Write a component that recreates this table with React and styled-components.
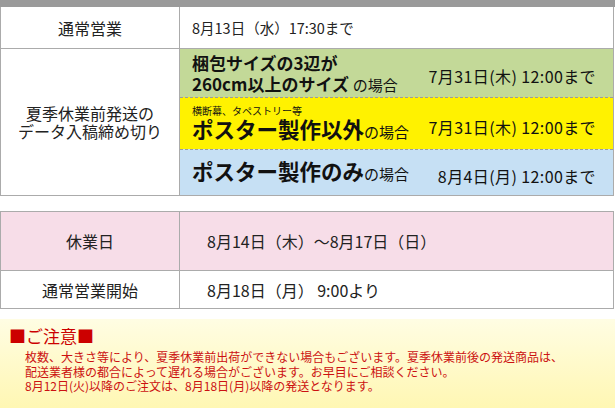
import React from 'react';
import styled, { createGlobalStyle } from 'styled-components';

const GlobalStyle = createGlobalStyle`
  body {
    margin: 0;
    background: #ffffff;
    font-family: "Noto Sans CJK JP", "Noto Sans", sans-serif;
    color: #222222;
  }
`;

const Page = styled.div`
  width: 615px;
`;

const TopBar = styled.div`
  height: 7px;
  background: #9a9a9a;
`;

const Table = styled.div`
  width: 612px;
  display: grid;
  grid-template-columns: 179px 1fr;
  border-left: 1px solid #ababab;
  border-right: 1px solid #ababab;
  border-top: ${({ $top }) => ($top ? '1px solid #ababab' : 'none')};
  margin-top: ${({ $gap }) => $gap || 0}px;
`;

const Label = styled.div`
  display: flex;
  flex-direction: column;
  align-items: center;
  justify-content: center;
  text-align: center;
  font-size: 16px;
  line-height: 18px;
  height: ${({ $h }) => ($h ? `${$h}px` : 'auto')};
  background: ${({ $bg }) => $bg || '#ffffff'};
  border-right: 1px solid #ababab;
  border-bottom: 1px solid #ababab;
`;

const LabelLine = styled.span`
  display: block;
`;

const Value = styled.div`
  display: flex;
  align-items: center;
  padding-left: ${({ $pad }) => $pad || 12}px;
  font-size: ${({ $size }) => $size || 16}px;
  height: ${({ $h }) => ($h ? `${$h}px` : 'auto')};
  background: ${({ $bg }) => $bg || '#ffffff'};
  border-bottom: 1px solid #ababab;
`;

const Stack = styled.div`
  display: flex;
  flex-direction: column;
  border-bottom: 1px solid #ababab;
`;

const Band = styled.div`
  display: flex;
  align-items: center;
  justify-content: space-between;
  height: ${({ $h }) => $h}px;
  padding: 0 17px 0 12px;
  background: ${({ $bg }) => $bg};
  & + & {
    border-top: 1px dashed #9c9c9c;
  }
`;

const Case = styled.div`
  display: flex;
  flex-direction: column;
  color: #111111;
`;

const Big = styled.span`
  display: block;
  font-weight: 700;
  font-size: ${({ $size }) => $size}px;
  line-height: ${({ $lh }) => $lh}px;
  white-space: nowrap;
`;

const Suffix = styled.span`
  font-weight: 400;
  font-size: 15px;
`;

const Small = styled.span`
  display: block;
  font-size: 10px;
  line-height: 13px;
  white-space: nowrap;
`;

const Deadline = styled.div`
  font-size: 16px;
  letter-spacing: 0.4px;
  margin-top: 6px;
  color: #111111;
  white-space: nowrap;
`;

const Note = styled.div`
  margin-top: 10px;
  height: 89px;
  box-sizing: border-box;
  padding: 6px 0 0 9px;
  background: linear-gradient(#fffde3, #fff7b3);
  color: #cc0000;
`;

const NoteTitle = styled.div`
  font-size: 17px;
  line-height: 22px;
`;

const NoteBody = styled.p`
  margin: 3px 0 0 16px;
  font-size: 12px;
  line-height: 14.5px;
  color: #cc1111;
`;

const bands = [
  {
    bg: '#c3d998',
    h: 48,
    date: '7月31日(木) 12:00まで',
    body: (
      <>
        <Big $size={17} $lh={21}>梱包サイズの3辺が</Big>
        <Big $size={17} $lh={21}>260cm以上のサイズ <Suffix>の場合</Suffix></Big>
      </>
    ),
  },
  {
    bg: '#fff200',
    h: 51,
    date: '7月31日(木) 12:00まで',
    body: (
      <>
        <Small>横断幕、タペストリー等</Small>
        <Big $size={21.5} $lh={24}>ポスター製作以外<Suffix>の場合</Suffix></Big>
      </>
    ),
  },
  {
    bg: '#c6e0f4',
    h: 45,
    date: '8月4日(月) 12:00まで',
    body: <Big $size={21.5} $lh={26}>ポスター製作のみ<Suffix>の場合</Suffix></Big>,
  },
];

export default function App() {
  return (
    <Page>
      <GlobalStyle />
      <TopBar />
      <Table>
        <Label $h={41}>通常営業</Label>
        <Value $size={14.5}>8月13日（水）17:30まで</Value>
        <Label>
          <LabelLine>夏季休業前発送の</LabelLine>
          <LabelLine>データ入稿締め切り</LabelLine>
        </Label>
        <Stack>
          {bands.map((b, i) => (
            <Band key={i} $bg={b.bg} $h={b.h}>
              <Case>{b.body}</Case>
              <Deadline>{b.date}</Deadline>
            </Band>
          ))}
        </Stack>
      </Table>
      <Table $top $gap={15}>
        <Label $h={58} $bg="#f7dde8">休業日</Label>
        <Value $h={58} $bg="#f7dde8" $pad={27}>8月14日（木）〜8月17日（日）</Value>
        <Label $h={37}>通常営業開始</Label>
        <Value $h={37} $pad={27}>8月18日（月） 9:00より</Value>
      </Table>
      <Note>
        <NoteTitle>■ご注意■</NoteTitle>
        <NoteBody>
          枚数、大きさ等により、夏季休業前出荷ができない場合もございます。夏季休業前後の発送商品は、
          <br />
          配送業者様の都合によって遅れる場合がございます。お早目にご相談ください。
          <br />
          8月12日(火)以降のご注文は、8月18日(月)以降の発送となります。
        </NoteBody>
      </Note>
    </Page>
  );
}
